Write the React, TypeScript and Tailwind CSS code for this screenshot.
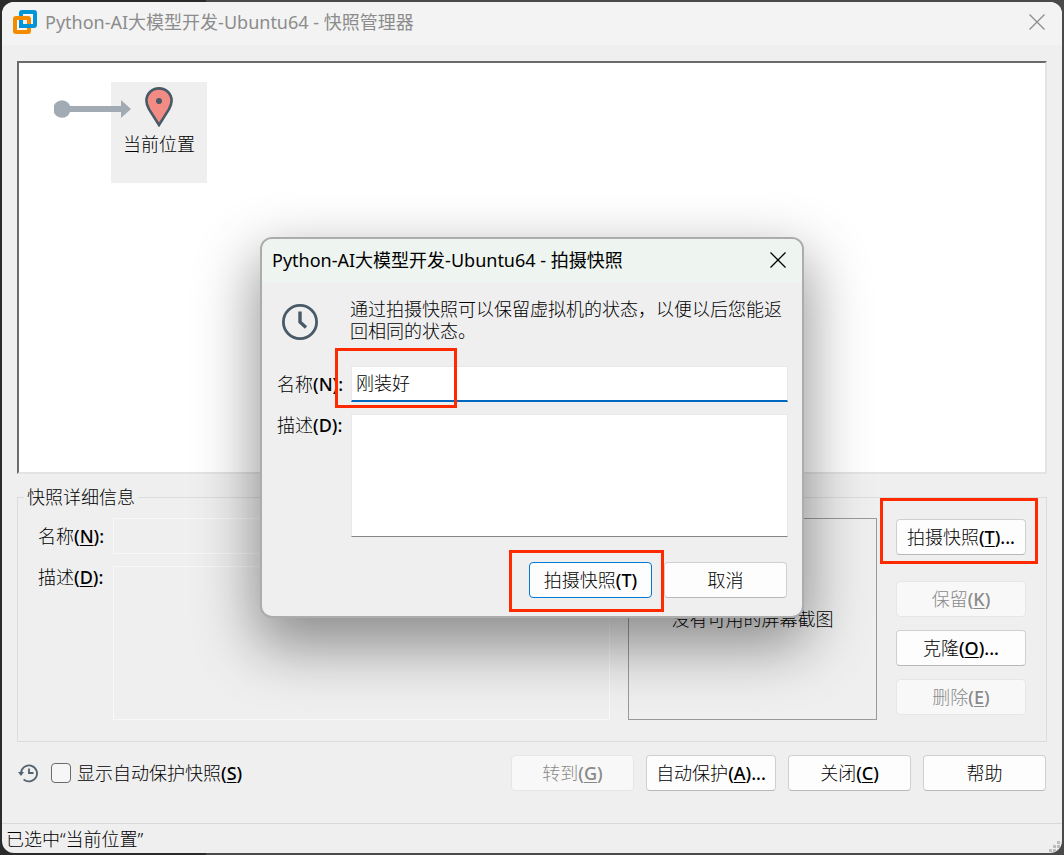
import { ReactNode, useState } from 'react'

interface PushButtonProps {
  children: ReactNode
  className?: string
  disabled?: boolean
  primary?: boolean
}

const PushButton = ({ children, className = '', disabled, primary }: PushButtonProps) => {
  const tone = disabled
    ? 'border-[#e6e6e6] bg-[#f8f8f8] text-[#8a8a8a]'
    : primary
      ? 'border-[#0078d4] bg-[#fdfdfd] text-black'
      : 'border-[#d0d0d0] border-b-[#b8b8b8] bg-[#fdfdfd] text-black'
  return (
    <button
      type="button"
      disabled={disabled}
      className={`h-9 rounded-[4px] border whitespace-nowrap ${tone} ${className}`}
    >
      {children}
    </button>
  )
}

interface KeyProps {
  children: string
  after?: string
  plain?: boolean
}

// Access key hint, e.g. "(N):"
const Key = ({ children, after = '', plain }: KeyProps) => (
  <span className="font-medium">
    (<span className={plain ? '' : 'underline underline-offset-2'}>{children}</span>){after}
  </span>
)

const CloseIcon = () => (
  <svg viewBox="0 0 16 16" className="h-4 w-4" fill="none" stroke="currentColor" strokeWidth="1.3">
    <path d="M.5.5l15 15M15.5.5l-15 15" />
  </svg>
)

const Logo = () => (
  <svg viewBox="0 0 24 24" className="h-6 w-6" fill="none" strokeWidth="4">
    <rect x="8" y="2" width="14" height="14" rx="1" stroke="#0095d6" />
    <rect x="2" y="8" width="14" height="14" rx="1" stroke="#f38b00" />
    <path d="M8 12v4h10" stroke="#0095d6" />
    <path d="M10.500 6V4.500h9v9H18M6 10.500H4.500v9h9V18" stroke="#fff" strokeOpacity=".35" strokeWidth="1" />
  </svg>
)

const ArrowLine = () => (
  <svg viewBox="0 0 77 20" className="relative mt-[17px] -mr-5 h-5 w-[77px]" fill="#a2abb3">
    <circle cx="8" cy="10" r="8.7" />
    <path d="M8 7h59V1l10 9-10 9v-6H8z" />
  </svg>
)

const Pin = () => (
  <svg viewBox="0 0 28 40" className="h-10 w-7">
    <path
      d="M14 1.4C6.8 1.4 1.4 7 1.4 13.7c0 3 1.2 5.8 2.6 8.5L14 38l10-15.8c1.4-2.7 2.6-5.5 2.6-8.5C26.6 7 21.2 1.4 14 1.4z"
      fill="#f28b84"
      stroke="#485a67"
      strokeWidth="2.6"
    />
    <circle cx="14" cy="14" r="3" fill="#485a67" />
  </svg>
)

const Clock = () => (
  <svg viewBox="0 0 36 36" className="h-9 w-9" fill="none" stroke="#485a67">
    <circle cx="18" cy="18" r="16.6" strokeWidth="2.8" />
    <path d="M18 7.5V18l6 5.500" strokeWidth="3.4" />
  </svg>
)

const HistoryIcon = () => (
  <svg viewBox="0 0 20 20" className="h-5 w-5" fill="none" stroke="#52626f" strokeWidth="1.8">
    <path d="M3 10.500a8 8 0 1 1 2.600 5.800" />
    <path d="M11 5.500V10h4.500" />
    <path d="M0 9h6l-3 4z" fill="#52626f" stroke="none" />
  </svg>
)

const Grip = () => (
  <svg viewBox="0 0 12 12" className="h-3 w-3" fill="#bdbdbd">
    <path d="M8 0h3v3H8zM4 4h3v3H4zM8 4h3v3H8zM0 8h3v3H0zM4 8h3v3H4zM8 8h3v3H8z" />
  </svg>
)

const SnapshotDialog = () => {
  const [name, setName] = useState('刚装好')

  return (
    <div
      role="dialog"
      aria-labelledby="dialog-title"
      className="w-[544px] rounded-xl border-2 border-[#acacac] bg-[#efefef] shadow-[0_24px_60px_4px_rgba(0,0,0,0.42)]"
    >
      <header className="flex h-[43px] items-center justify-between rounded-t-[10px] bg-[#eef4ef] pr-4 pb-[2px] pl-[10px] font-normal">
        <h2 id="dialog-title">Python-AI大模型开发-Ubuntu64 - 拍摄快照</h2>
        <button type="button" aria-label="关闭">
          <CloseIcon />
        </button>
      </header>

      <div className="flex gap-8 pt-4 pr-5 pl-5">
        <div className="pt-[6px]">
          <Clock />
        </div>
        <p className="leading-[22px]">
          通过拍摄快照可以保留虚拟机的状态，以便以后您能返回相同的状态。
        </p>
      </div>

      <div className="mt-6 grid grid-cols-[74px_1fr] gap-y-3 pr-[14px] pl-[15px]">
        <label htmlFor="name" className="pt-[7px] leading-[22px]">
          名称<Key plain after=":">N</Key>
        </label>
        <div className="relative">
          <input
            id="name"
            value={name}
            onChange={(e) => setName(e.target.value)}
            className="h-9 w-full border border-[#e8e8e8] border-b-2 border-b-[#0067c0] bg-white px-1 pb-1 outline-none"
          />
          <span className="pointer-events-none absolute -top-[18px] -left-4 h-[60px] w-[122px] border-3 border-[#ff2a00]" />
        </div>
        <label htmlFor="description" className="leading-[22px]">
          描述<Key plain after=":">D</Key>
        </label>
        <textarea
          id="description"
          className="block h-[123px] w-full resize-none border border-[#e8e8e8] border-b-[#868686] bg-white px-1 outline-none"
        />
      </div>

      <div className="mt-[25px] mb-[18px] flex justify-end gap-3 pr-[15px]">
        <div className="relative">
          <PushButton primary className="w-[123px]">
            拍摄快照<Key plain>T</Key>
          </PushButton>
          <span className="pointer-events-none absolute -top-3 -right-3 -bottom-[14px] -left-5 border-3 border-[#ff2a00]" />
        </div>
        <PushButton className="w-[123px]">取消</PushButton>
      </div>
    </div>
  )
}

export default function App() {
  return (
    <div className="relative flex min-h-screen flex-col bg-[linear-gradient(90deg,#2b2b2b_206px,#4a4a4a_206px)] p-[2px] font-['Noto_Sans','Noto_Sans_CJK_SC',sans-serif] text-[18px] leading-6 font-light text-black">
      <div className="flex flex-1 flex-col overflow-hidden rounded-xl bg-[#efefef]">
        <header className="flex h-[43px] items-center bg-[#f3f3f3] pr-[17px] pb-[3px] pl-[11px] font-normal text-[#8c8c8c]">
          <Logo />
          <h1 className="ml-2 flex-1">Python-AI大模型开发-Ubuntu64 - 快照管理器</h1>
          <button type="button" aria-label="关闭">
            <CloseIcon />
          </button>
        </header>

        <main className="flex flex-1 flex-col px-[15px] pt-4 pb-8">
          {/* Snapshot tree */}
          <section className="flex flex-1 items-start border-2 border-t-[#6b6b6b] border-r-[#e3e3e3] border-b-[#e3e3e3] border-l-[#6b6b6b] bg-white pt-[19px] pl-[35px]">
            <ArrowLine />
            <div className="flex h-[101px] w-24 flex-col items-center bg-[#efefef] pt-[5px]">
              <Pin />
              <span className="mt-[5px]">当前位置</span>
            </div>
          </section>

          {/* Details */}
          <fieldset className="mt-[11px] border border-[#dcdcdc] pb-[21px]">
            <legend className="ml-[6px] px-[3px]">快照详细信息</legend>
            <div className="flex px-5 pt-[9px]">
              <div className="grid flex-1 grid-cols-[75px_1fr] gap-y-3">
                <label htmlFor="snapshot-name" className="pt-[6px]">
                  名称<Key after=":">N</Key>
                </label>
                <input
                  id="snapshot-name"
                  readOnly
                  className="h-9 w-full min-w-0 border border-[#f8f8f8] px-1 outline-none"
                />
                <label htmlFor="snapshot-description" className="-mt-px">
                  描述<Key after=":">D</Key>
                </label>
                <textarea
                  id="snapshot-description"
                  readOnly
                  className="block h-[154px] w-full resize-none border border-[#f8f8f8] px-1 outline-none"
                />
              </div>
              <div className="ml-[18px] flex w-[249px] items-center justify-center border border-[#9a9a9a]">
                没有可用的屏幕截图
              </div>
              <div className="ml-[19px] flex w-[130px] flex-col pt-px">
                <div className="relative mb-[26px]">
                  <PushButton className="w-full">
                    拍摄快照<Key after="...">T</Key>
                  </PushButton>
                  <span className="pointer-events-none absolute -top-[21px] -right-3 -bottom-[9px] -left-4 border-3 border-[#ff2a00]" />
                </div>
                <div className="flex flex-col gap-[13px]">
                  <PushButton disabled>
                    保留<Key>K</Key>
                  </PushButton>
                  <PushButton>
                    克隆<Key after="...">O</Key>
                  </PushButton>
                  <PushButton disabled>
                    删除<Key>E</Key>
                  </PushButton>
                </div>
              </div>
            </div>
          </fieldset>

          {/* Actions */}
          <div className="mt-[13px] flex items-center gap-3 pr-px">
            <div className="flex flex-1 items-center pl-px">
              <HistoryIcon />
              <input
                id="autoprotect"
                type="checkbox"
                className="mr-[6px] ml-[13px] h-5 w-5 appearance-none rounded-[4px] border border-[#6a6a6a] bg-[#f6f6f6] checked:bg-[#0067c0]"
              />
              <label htmlFor="autoprotect">
                显示自动保护快照<Key>S</Key>
              </label>
            </div>
            <PushButton disabled className="w-[123px]">
              转到<Key>G</Key>
            </PushButton>
            <PushButton className="w-[130px]">
              自动保护<Key after="...">A</Key>
            </PushButton>
            <PushButton className="w-[123px]">
              关闭<Key>C</Key>
            </PushButton>
            <PushButton className="w-[123px]">帮助</PushButton>
          </div>
        </main>

        <footer className="flex h-[30px] items-center justify-between border-t border-[#d9d9d9] pr-px pl-1">
          <span>已选中“当前位置”</span>
          <span className="self-end">
            <Grip />
          </span>
        </footer>
      </div>

      <div className="absolute inset-0 flex items-center justify-center">
        <SnapshotDialog />
      </div>
    </div>
  )
}
